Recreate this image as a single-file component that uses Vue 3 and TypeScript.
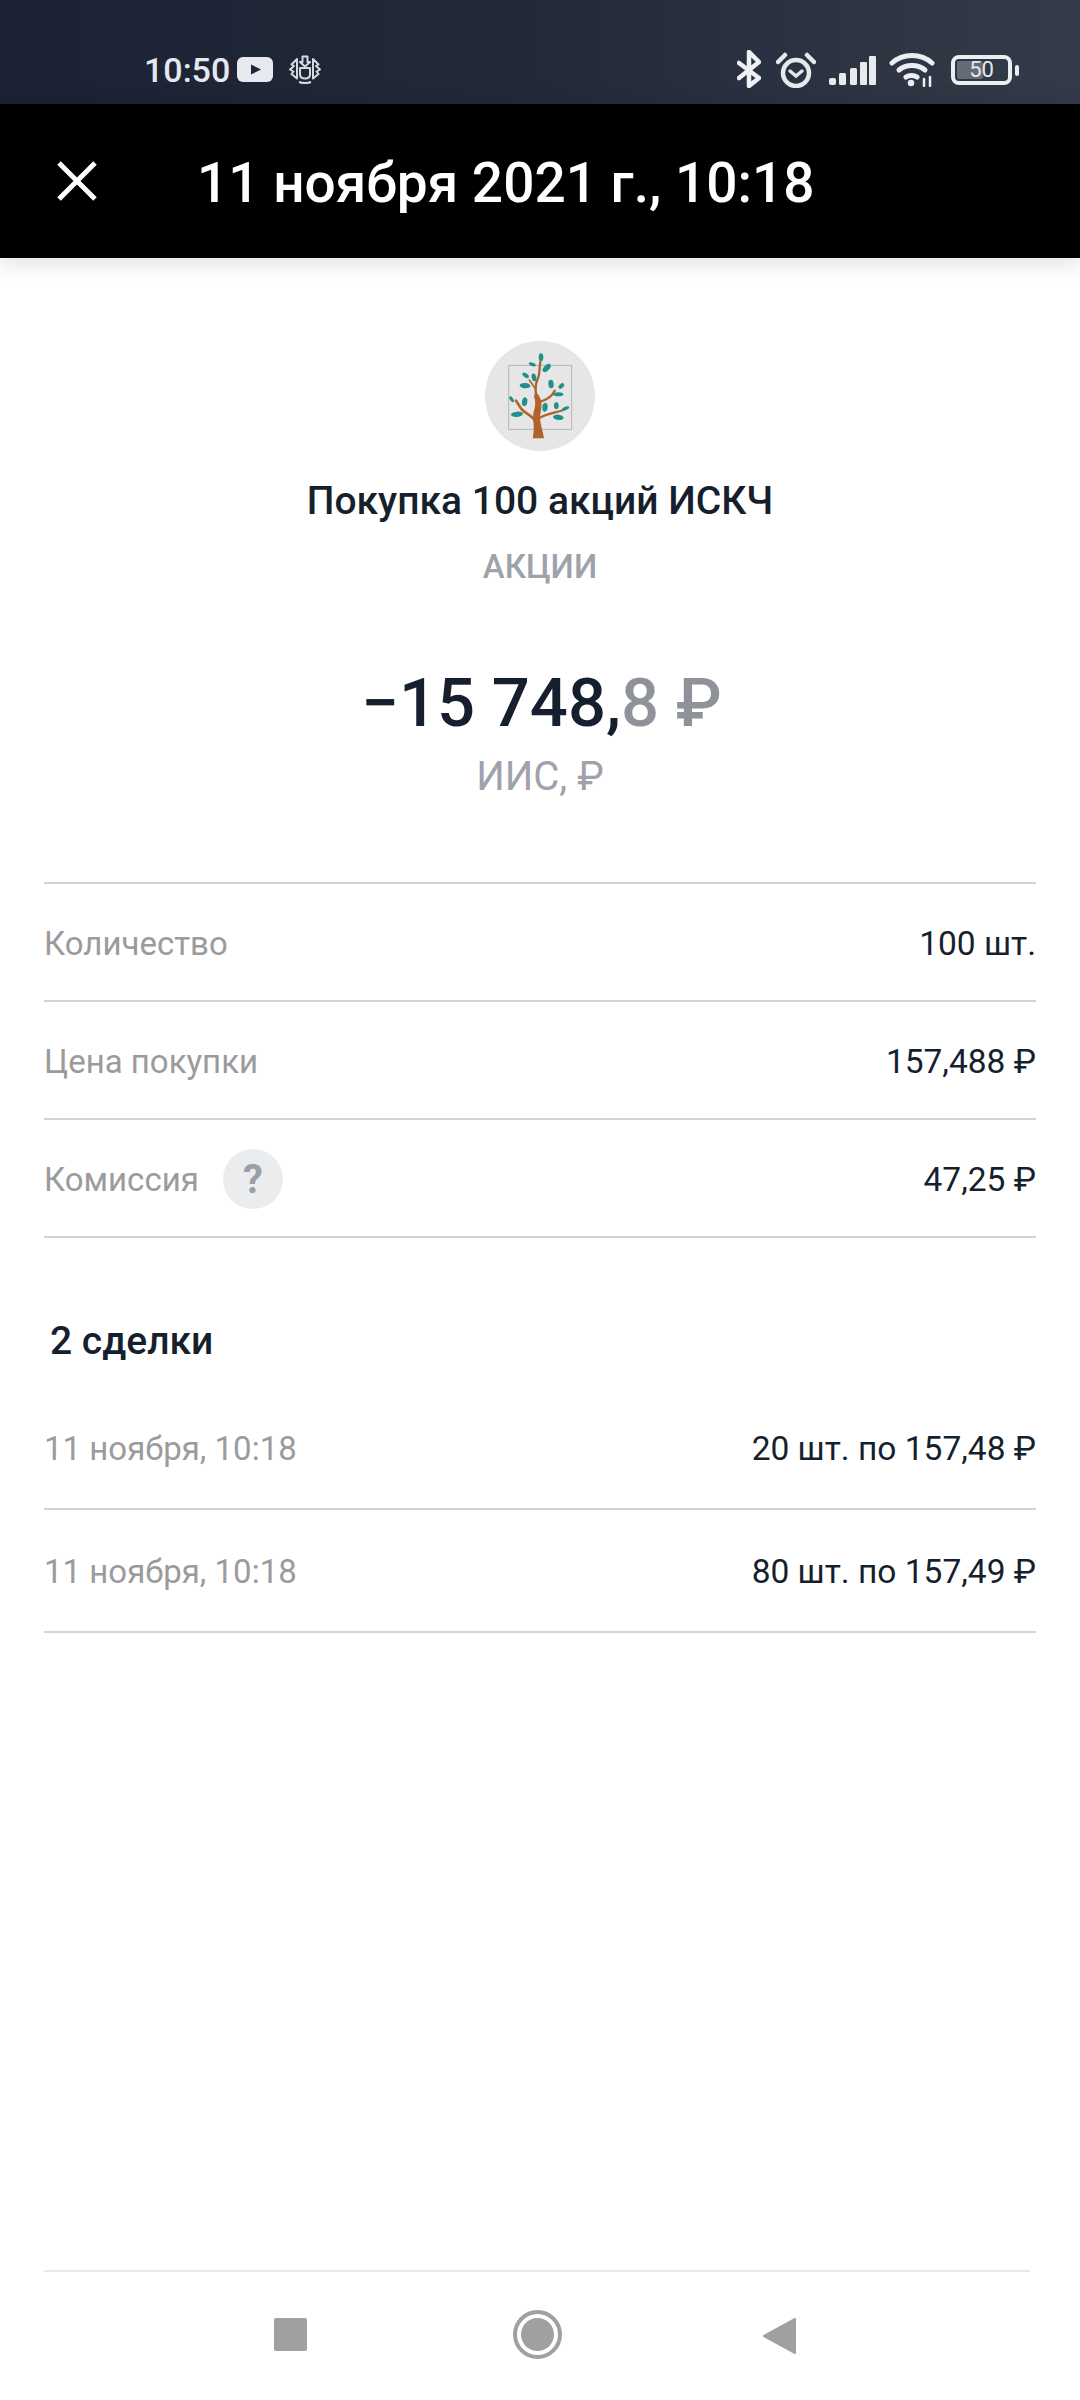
<script setup lang="ts">
interface Row { label: string; value: string; help?: boolean }
const rows: Row[] = [
  { label: 'Количество', value: '100 шт.' },
  { label: 'Цена покупки', value: '157,488 ₽' },
  { label: 'Комиссия', value: '47,25 ₽', help: true },
]
const deals = [
  { date: '11 ноября, 10:18', value: '20 шт. по 157,48 ₽' },
  { date: '11 ноября, 10:18', value: '80 шт. по 157,49 ₽' },
]
const leaves = [
  [243, 82, 7, 12, 0], [217, 103, 11, 5, 20], [260, 114, 15, 8, -45], [197, 136, 11, 6, 35],
  [222, 142, 7, 12, -15], [195, 167, 16, 8, 5], [273, 162, 8, 13, -5], [304, 168, 10, 6, -45],
  [295, 193, 15, 6, 0], [155, 208, 10, 5, 55], [194, 215, 8, 13, 10], [255, 232, 8, 13, 5],
  [289, 227, 7, 10, 0], [317, 235, 11, 5, -20], [171, 253, 18, 8, -5], [295, 262, 16, 8, 8],
]
</script>

<template>
  <div class="page">
    <div class="status">
      <div class="status-left">
        <span class="time">10:50</span>
        <svg class="yt" width="36" height="25" viewBox="0 0 36 25">
          <rect width="36" height="25" rx="6" fill="#e8e9ee" />
          <path d="M14 7.5 L24 12.5 L14 17.5 Z" fill="#1d2536" />
        </svg>
        <svg class="emblem" width="32" height="29" viewBox="0 0 32 29" fill="none" stroke="#d5d8de" stroke-width="2" stroke-linejoin="round">
          <path d="M13.5 7V1.500h5V7l2.500 0-5 4.500-5-4.500z" />
          <path d="M11 13h10v6.500c0 2.500-2 4-5 4s-5-1.500-5-4z" />
          <path d="M8 4 2.500 9.500l2.500 1.500-4 3.500 3.500 2-2 2.500L8 23.500V4zM24 4l5.500 5.500-2.500 1.500 4 3.500-3.500 2 2 2.500L24 23.500V4z" />
          <path d="M10 27c4 1.500 8 1.500 12 0" />
        </svg>
      </div>
      <div class="status-right">
        <svg width="24" height="38" viewBox="0 0 24 38" fill="none" stroke="#eef0f4" stroke-width="4.5" stroke-linecap="round" stroke-linejoin="round">
          <path d="M2 13 22 28 12 36V2L22 12 2 28" />
        </svg>
        <svg class="alarm" width="40" height="36" viewBox="0 0 40 36" fill="none" stroke="#e6e8ec" stroke-width="4.5" stroke-linecap="round">
          <circle cx="20" cy="21" r="13" />
          <path d="M14 19l6 5 6-5" stroke-width="3.500" />
          <path d="M2 10 9 3M38 10 31 3" />
        </svg>
        <svg class="signal" width="48" height="30" viewBox="0 0 48 30" fill="#e8eaee">
          <rect x="1" y="22" width="7" height="7" rx="2" />
          <rect x="11" y="17" width="7" height="12" rx="1.500" />
          <rect x="22" y="12" width="7" height="17" rx="1.500" />
          <rect x="32" y="6" width="7" height="23" rx="1" />
          <rect x="41" y="0" width="7" height="29" rx="1" />
        </svg>
        <svg class="wifi" width="46" height="34" viewBox="0 0 46 34" fill="none" stroke="#eceef2" stroke-width="5" stroke-linecap="round">
          <path d="M3 10C14 0 32 0 43 10" />
          <path d="M10 17c7-6 19-6 26 0" />
          <path d="M17 24c3-2 8-2 11 0" />
          <circle cx="22" cy="30" r="2.500" fill="#eceef2" stroke-width="1.500" />
          <path d="M35 26v7M41 24v9" stroke-width="2.500" />
        </svg>
        <div class="battery">
          <div class="battery-body">
            <div class="battery-level"></div>
            <span class="battery-text">50</span>
          </div>
          <div class="battery-nub"></div>
        </div>
      </div>
    </div>

    <header class="appbar">
      <svg class="close" width="40" height="40" viewBox="0 0 40 40" stroke="#fff" stroke-width="5" fill="none">
        <path d="M2 2 38 38M38 2 2 38" />
      </svg>
      <h1 class="appbar-title">11 ноября 2021 г., 10:18</h1>
    </header>

    <main class="content">
      <section class="hero">
        <div class="logo">
          <svg width="110" height="110" viewBox="75 33 330 330">
            <circle cx="240" cy="198" r="165" fill="#e6e6e6" />
            <rect x="146" y="106" width="189" height="192" fill="none" stroke="#b5b5b5" stroke-width="3" />
            <g fill="none" stroke="#b1622d" stroke-linecap="round">
              <path d="M232 205C225 190 224 165 234 145C240 130 238 110 241 96" stroke-width="7" />
              <path d="M228 178C220 168 214 158 208 150" stroke-width="5" />
              <path d="M238 216C258 210 276 200 284 182" stroke-width="7" />
              <path d="M228 274C212 252 192 250 182 234C178 226 172 218 168 212" stroke-width="8" />
              <path d="M236 266C255 252 280 250 310 240" stroke-width="7" />
            </g>
            <path d="M218 325L252 325C248 300 241 285 240 262C241 245 248 228 242 208C239 198 231 190 226 184L222 200C228 215 226 230 221 245C216 262 226 290 218 325Z" fill="#b1622d" />
            <g fill="#20908a">
              <ellipse v-for="(l, i) in leaves" :key="i" :cx="l[0]" :cy="l[1]" :rx="l[2]" :ry="l[3]" :transform="`rotate(${l[4]} ${l[0]} ${l[1]})`" />
            </g>
          </svg>
        </div>
        <div class="op-title">Покупка 100 акций ИСКЧ</div>
        <div class="op-type">АКЦИИ</div>
        <div class="amount"><span>−15 748,</span><span class="amount-dim">8 ₽</span></div>
        <div class="account">ИИС, ₽</div>
      </section>

      <section class="details">
        <div v-for="r in rows" :key="r.label" class="row">
          <div class="row-label">
            <span>{{ r.label }}</span>
            <span v-if="r.help" class="help">?</span>
          </div>
          <span class="row-value">{{ r.value }}</span>
        </div>
      </section>

      <h2 class="deals-title">2 сделки</h2>
      <section class="deals">
        <div v-for="(d, i) in deals" :key="i" class="row deal">
          <span class="row-label">{{ d.date }}</span>
          <span class="row-value">{{ d.value }}</span>
        </div>
      </section>
    </main>

    <footer class="nav">
      <div class="nav-buttons">
        <div class="nav-square"></div>
        <div class="nav-home"><div class="nav-home-dot"></div></div>
        <svg width="34" height="38" viewBox="0 0 34 38">
          <path d="M32 2 V36 L1 19 Z" fill="#a0a0a0" stroke="#a0a0a0" stroke-width="2" stroke-linejoin="round" />
        </svg>
      </div>
    </footer>
  </div>
</template>

<style>
html, body { margin: 0; background: #fff; }
</style>

<style scoped>
.page {
  width: 1080px;
  height: 2400px;
  display: flex;
  flex-direction: column;
  background: #fff;
  font-family: Roboto, "Liberation Sans", sans-serif;
  overflow: hidden;
}
.status {
  height: 104px;
  flex: none;
  display: flex;
  justify-content: space-between;
  box-sizing: border-box;
  padding: 48px 61px 0 144px;
  background: linear-gradient(90deg, #1a2233 0%, #222a3a 50%, #343b48 100%);
}
.status-left { display: flex; align-items: flex-start; }
.time { color: #e6e8ee; font-size: 34px; font-weight: 500; line-height: 44px; }
.yt { margin: 9px 0 0 7px; }
.emblem { margin: 7px 0 0 16px; }
.status-right { display: flex; align-items: flex-start; }
.status-right > svg:first-child { margin: 2px 0 0 0; }
.alarm { margin: 4px 0 0 15px; }
.signal { margin: 8px 0 0 12px; }
.wifi { margin: 5px 0 0 13px; }
.battery { display: flex; align-items: center; margin: 7px 0 0 16px; }
.battery-body {
  position: relative;
  width: 61px;
  height: 30px;
  box-sizing: border-box;
  border: 4px solid #eceef2;
  border-radius: 8px;
  display: flex;
  align-items: center;
  justify-content: center;
}
.battery-level {
  position: absolute;
  left: 2px;
  top: 2px;
  bottom: 2px;
  width: 26px;
  background: #666b78;
  border-radius: 2px;
}
.battery-text { position: relative; color: #e6e8ee; font-size: 22px; line-height: 22px; }
.battery-nub { width: 4px; height: 11px; margin-left: 3px; background: #eceef2; border-radius: 2px; }

.appbar {
  height: 154px;
  flex: none;
  display: flex;
  align-items: center;
  background: #000;
  box-sizing: border-box;
  padding: 0 0 4px 57px;
  box-shadow: 0 4px 22px rgba(0, 0, 0, 0.14);
  position: relative;
}
.close { margin-top: 4px; }
.appbar-title { margin: 8px 0 0 100px; color: #fff; font-size: 55px; font-weight: 500; line-height: 64px; }

.content { flex: 1; display: flex; flex-direction: column; padding: 0 44px; }
.hero { display: flex; flex-direction: column; align-items: center; }
.logo { width: 110px; height: 110px; margin-top: 83px; }
.logo svg { display: block; }
.op-title { margin-top: 26px; font-size: 39px; line-height: 48px; font-weight: 500; color: #161f2e; }
.op-type { margin-top: 18px; font-size: 33px; line-height: 48px; font-weight: 500; color: #9ea2aa; }
.amount { margin: 72px 0 0 3px; font-size: 67px; line-height: 80px; font-weight: 500; color: #161f2e; }
.amount-dim { color: #8f9298; }
.account { margin-top: 10px; font-size: 40px; line-height: 48px; color: #9ea2aa; }

.details { margin-top: 81px; border-top: 2px solid #d4d4d4; }
.row {
  height: 118px;
  box-sizing: border-box;
  padding-top: 2px;
  border-bottom: 2px solid #d4d4d4;
  display: flex;
  align-items: center;
  justify-content: space-between;
}
.row-label { display: flex; align-items: center; color: #9b9b9b; font-size: 33px; }
.row-value { color: #161f2e; font-size: 33.5px; }
.help {
  width: 60px;
  height: 60px;
  margin-left: 24px;
  border-radius: 50%;
  background: #eaecee;
  color: #9a9ea6;
  font-size: 40px;
  font-weight: 700;
  display: flex;
  align-items: center;
  justify-content: center;
}
.deals-title { margin: 79px 0 0 6px; font-size: 39px; line-height: 48px; font-weight: 500; color: #161f2e; }
.deals { margin-top: 22px; }
.deal { height: 123px; }

.nav { height: 130px; flex: none; padding: 0 50px 0 44px; }
.nav-buttons {
  border-top: 2px solid #e8e8e8;
  height: 128px;
  display: flex;
  align-items: flex-start;
  justify-content: space-between;
  padding: 0 233px 0 230px;
}
.nav-square { width: 33px; height: 33px; margin-top: 46px; background: #a0a0a0; border-radius: 2px; }
.nav-home {
  width: 49px;
  height: 49px;
  margin: 38px 0 0 5px;
  box-sizing: border-box;
  border: 4px solid #a0a0a0;
  border-radius: 50%;
  display: flex;
  align-items: center;
  justify-content: center;
}
.nav-home-dot { width: 33px; height: 33px; border-radius: 50%; background: #a0a0a0; }
.nav-buttons svg { margin-top: 45px; }
</style>
